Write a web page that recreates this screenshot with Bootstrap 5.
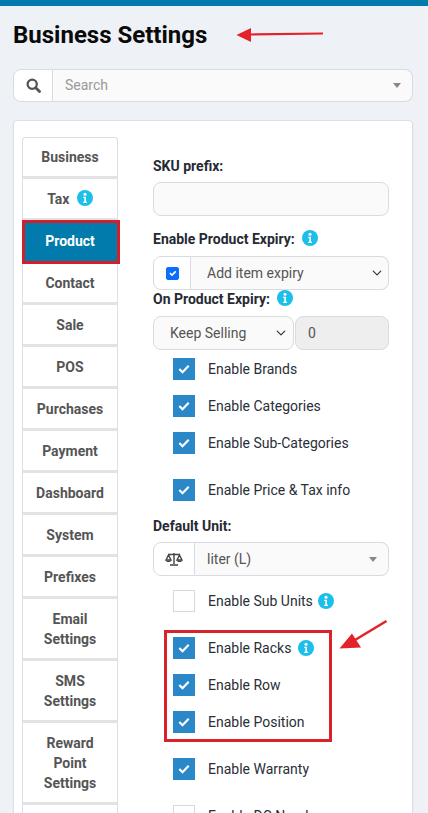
<!DOCTYPE html>
<html lang="en"><head><meta charset="utf-8"><title>Business Settings</title>
<link href="https://cdn.jsdelivr.net/npm/bootstrap@5.3.0/dist/css/bootstrap.min.css" rel="stylesheet">
<style>
html,body{height:813px;overflow:hidden}
body{background:#eef1f6;font-family:Roboto,"Liberation Sans",sans-serif;font-size:14px;color:#262a33;position:relative}
.topline{height:6px;background:#007bab}
.page-title{font-size:24px;font-weight:700;color:#0a0a0a;line-height:28px;margin:15px 0 20px 13px}
.search-group{margin:0 15px 18px 13px;height:33px;width:400px}
.addon{width:40px;background:#fff;border:1px solid #d8dbe0;border-radius:8px 0 0 8px;display:flex;align-items:center;justify-content:center;flex:none}
.fake-select{flex:1;background:#fafafa;border:1px solid #d8dbe0;border-left:0;border-radius:0 8px 8px 0;display:flex;align-items:center;justify-content:space-between;padding:0 12px;color:#444;font-size:14px}
.fake-select.ph{color:#999}
.caret-d{width:0;height:0;border-left:4px solid transparent;border-right:4px solid transparent;border-top:5px solid #888;margin-right:-1px}
.panel{margin:0 15px 0 13px;width:400px;height:900px;background:#fff;border:1px solid #dcdfe4;border-radius:4px;padding:15px 8px;display:flex;box-shadow:0 1px 2px rgba(0,0,0,.06)}
.side{width:96px;flex:none;margin-top:1px;border:1px solid #dcdfe4;border-top-left-radius:3px;border-top-right-radius:3px;border-bottom:0;align-self:flex-start}
.side a{display:block;text-align:center;color:#555;font-weight:700;font-size:14px;line-height:20px;padding:10px 12px 9px;border-bottom:3px solid #e2e3e6;text-decoration:none;min-height:42px}
.side a.first{padding-top:9px;min-height:41px}
.side a.wide{padding-left:4px;padding-right:4px}
.side a.on{background:#007bab;color:#fff;border:3px solid #d1202a;border-radius:0;margin:-1px -3px -1px -1px;padding:8px 14px 8px 12px;min-height:44px;position:relative}
.pane{width:236px;margin-left:35px;flex:none}
.lbl{display:block;font-weight:700;font-size:14px;line-height:18px;color:#262a33}
.box-input{height:34px;background:#fafafa;border:1px solid #d8dbe0;border-radius:8px;font-size:14px;margin-top:7px}
.box-input:focus{background:#fafafa}
.exp-group .addon{width:38px}
.exp-group .form-select{background-color:#fafafa;border-color:#d8dbe0;border-radius:0 8px 8px 0;height:34px;font-size:14px;color:#555;padding:0 24px 0 16px;border-left:0;background-size:12px 10px;background-position:right 5px center}
.keep{width:141px;flex:none;border-radius:8px;background-color:#fafafa;border-color:#d8dbe0;height:34px;font-size:14px;color:#555;padding:0 20px 0 16px;background-size:12px 10px;background-position:right 6px center}
.zero{flex:1;min-width:0;margin-left:1px;height:34px;border-radius:8px;background:#eeeeee;border:1px solid #d8dbe0;font-size:14px;padding:0 12px;color:#555}
.chk{display:flex;align-items:center;margin-left:20px;height:22px;font-size:14px;color:#2a2e37}
.tick{width:22px;height:22px;flex:none;margin-right:13px;background:#2a87c8;display:flex;align-items:center;justify-content:center}
.tick.off{background:#fff;border:1px solid #d6d8dc}
.info{display:inline-block;width:16px;height:16px;vertical-align:-2px;margin-left:4px}
.mt15{margin-top:15px}.mt25{margin-top:25px}
.unit-addon{width:42px}
.note-box{position:absolute;left:164px;top:630px;width:168px;height:112px;border:3px solid #d9232b}
.note-arrow{position:absolute;left:0;top:0;pointer-events:none}
</style></head><body>
<div class="topline"></div>
<h1 class="page-title">Business Settings</h1>
<div class="d-flex search-group">
  <span class="addon"><svg width="15" height="15" viewBox="0 0 16 16"><circle cx="6.600" cy="6.600" r="4.900" fill="none" stroke="#555" stroke-width="2.400"/><path d="M10.400 10.400l4 4" stroke="#555" stroke-width="3" stroke-linecap="round"/></svg></span>
  <div class="fake-select ph"><span>Search</span><span class="caret-d"></span></div>
</div>
<div class="panel">
  <nav class="side">
    <a href="#" class="first">Business</a>
    <a href="#" class="wide">Tax <svg class="info" viewBox="0 0 16 16"><use href="#i"/></svg></a>
    <a href="#" class="on">Product</a>
    <a href="#">Contact</a><a href="#">Sale</a><a href="#">POS</a><a href="#">Purchases</a><a href="#">Payment</a><a href="#" class="wide">Dashboard</a><a href="#">System</a><a href="#">Prefixes</a>
    <a href="#">Email Settings</a>
    <a href="#">SMS Settings</a>
    <a href="#">Reward Point Settings</a>
    <a href="#" aria-label="More"></a>
  </nav>
  <div class="pane">
    <label class="lbl" style="margin-top:21px">SKU prefix:</label>
    <input class="form-control box-input">
    <label class="lbl" style="margin-top:14px;margin-bottom:8px">Enable Product Expiry: <svg class="info" viewBox="0 0 16 16"><use href="#i"/></svg></label>
    <div class="d-flex exp-group">
      <span class="addon"><input type="checkbox" checked class="form-check-input m-0" style="width:13px;height:13px;border-radius:2px;background-color:#0d6efd;border-color:#0d6efd"></span>
      <select class="form-select"><option>Add item expiry</option></select>
    </div>
    <label class="lbl" style="margin-bottom:8px">On Product Expiry: <svg class="info" viewBox="0 0 16 16"><use href="#i"/></svg></label>
    <div class="d-flex">
      <select class="form-select keep"><option>Keep Selling</option></select>
      <input class="zero" value="0" disabled>
    </div>
    <div class="chk" style="margin-top:8px"><span class="tick"><svg width="12" height="10" viewBox="0 0 12 10"><use href="#c"/></svg></span>Enable Brands</div>
    <div class="chk mt15"><span class="tick"><svg width="12" height="10" viewBox="0 0 12 10"><use href="#c"/></svg></span>Enable Categories</div>
    <div class="chk mt15"><span class="tick"><svg width="12" height="10" viewBox="0 0 12 10"><use href="#c"/></svg></span>Enable Sub-Categories</div>
    <div class="chk mt25"><span class="tick"><svg width="12" height="10" viewBox="0 0 12 10"><use href="#c"/></svg></span>Enable Price &amp; Tax info</div>
    <label class="lbl" style="margin-top:16px;margin-bottom:7px">Default Unit:</label>
    <div class="d-flex" style="height:34px">
      <span class="addon unit-addon"><svg width="18" height="14" viewBox="0 0 18 14"><g fill="none" stroke="#444" stroke-width="1.400"><path d="M9 1v11M5 13h8M3 2.500h12"/><path d="M3.500 3L1 8h5zM14.500 3L12 8h5z"/></g><path d="M1 8.400h5c0 2-5 2-5 0zM12 8.400h5c0 2-5 2-5 0z" fill="#444"/></svg></span>
      <div class="fake-select" style="color:#555"><span>liter (L)</span><span class="caret-d"></span></div>
    </div>
    <div class="chk" style="margin-top:14px"><span class="tick off"></span>Enable Sub Units <svg class="info" style="margin-left:5px" viewBox="0 0 16 16"><use href="#i"/></svg></div>
    <div class="chk" style="margin-top:25px"><span class="tick"><svg width="12" height="10" viewBox="0 0 12 10"><use href="#c"/></svg></span>Enable Racks <svg class="info" style="margin-left:7px" viewBox="0 0 16 16"><use href="#i"/></svg></div>
    <div class="chk mt15"><span class="tick"><svg width="12" height="10" viewBox="0 0 12 10"><use href="#c"/></svg></span>Enable Row</div>
    <div class="chk mt15"><span class="tick"><svg width="12" height="10" viewBox="0 0 12 10"><use href="#c"/></svg></span>Enable Position</div>
    <div class="chk mt25"><span class="tick"><svg width="12" height="10" viewBox="0 0 12 10"><use href="#c"/></svg></span>Enable Warranty</div>
    <div class="chk mt25"><span class="tick off"></span>Enable DC Number</div>
  </div>
</div>
<div class="note-box"></div>
<svg class="note-arrow" width="428" height="813" viewBox="0 0 428 813">
  <path d="M323 33.500L250 34.500" stroke="#e3222a" stroke-width="2.200" fill="none"/><path d="M236.500 35L251 28v14z" fill="#e3222a"/>
  <path d="M386.500 621L355 640" stroke="#e3222a" stroke-width="2.600" fill="none"/><path d="M339.500 648.500L352 633.500l9 14z" fill="#e3222a"/>
</svg>
<svg width="0" height="0" class="position-absolute"><defs>
  <g id="i"><circle cx="8" cy="8" r="8" fill="#1bbfe9"/><circle cx="8" cy="4.300" r="1.500" fill="#fff"/><path d="M6.200 6.800h2.800v5h1v1.200H6.200v-1.200h1.100V8H6.200z" fill="#fff"/></g>
  <path id="c" d="M1.300 5l3.200 3.200L10.700 1.800" fill="none" stroke="#fff" stroke-width="2.200"/>
</defs></svg>
<script src="https://cdn.jsdelivr.net/npm/bootstrap@5.3.0/dist/js/bootstrap.bundle.min.js"></script>
</body></html>
